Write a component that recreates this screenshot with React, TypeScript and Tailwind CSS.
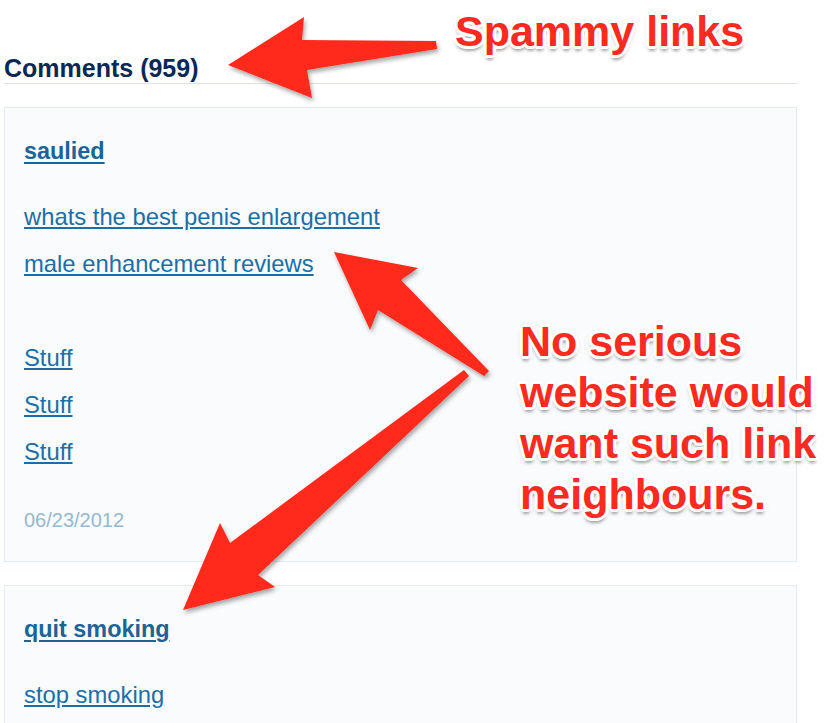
import React from 'react';

const sans = "font-['Liberation_Sans',Arial,Helvetica,sans-serif]";

// white halo + soft grey drop under the callout lettering
const callout =
    "absolute font-bold text-[43px] text-[#ff2a1f] leading-[51px] whitespace-pre " +
    "[text-shadow:-3px_0_0_#fff,3px_0_0_#fff,0_-3px_0_#fff,0_3px_0_#fff,-2px_-2px_0_#fff,2px_-2px_0_#fff,-2px_2px_0_#fff,2px_2px_0_#fff,-3px_-1px_0_#fff,3px_1px_0_#fff,-1px_3px_0_#fff,1px_-3px_0_#fff,0_5px_3px_rgba(0,0,0,0.3),0_2px_6px_rgba(0,0,0,0.25)]";

interface Comment {
    author: string;
    lines: string[];
    date?: string;
}

const comments: Comment[] = [
    {
        author: 'saulied',
        lines: ['whats the best penis enlargement', 'male enhancement reviews', '', 'Stuff', 'Stuff', 'Stuff'],
        date: '06/23/2012',
    },
    {
        author: 'quit smoking',
        lines: ['stop smoking'],
    },
];

function CommentCard({ c }: { c: Comment }) {
    return (
        <div className="mt-[23px] border border-[#e3ecf2] bg-[#f9fbfd] pl-[19px] pt-[28px] pb-[29px]">
            <a href="#" className="block text-[23.4px] leading-[30px] font-bold text-[#1b6498] underline decoration-2 underline-offset-[3px]">
                {c.author}
            </a>
            <div className="mt-[27px]">
                {c.lines.map((l, i) =>
                    l ? (
                        <div key={i} className="h-[47px] leading-[47px]">
                            <a href="#" className="text-[23.8px] text-[#1b6fa6] underline underline-offset-[2px]">
                                {l}
                            </a>
                        </div>
                    ) : (
                        <div key={i} className="h-[47px]" />
                    )
                )}
            </div>
            {c.date && <div className="mt-[33px] text-[20px] leading-[24px] text-[#96b8d1]">{c.date}</div>}
        </div>
    );
}

function Arrows() {
    return (
        <svg className="absolute left-0 top-0 pointer-events-none" width="838" height="723" viewBox="0 0 838 723">
            <defs>
                <filter id="arrowShadow" x="-10%" y="-10%" width="130%" height="130%">
                    <feDropShadow dx="1.5" dy="3" stdDeviation="2" floodColor="#000" floodOpacity="0.35" />
                </filter>
            </defs>
            <g fill="#ff2a1f" filter="url(#arrowShadow)">
                {/* points left at the heading */}
                <polygon points="228,65 304,17 302,40 436,41 437,49 307,70 312,98" />
                {/* points up-left at the link list */}
                <polygon points="334,252 418,268 401,280 489,371 484,376 378,310 370,330" />
                {/* points down-left at the next card */}
                <polygon points="183,610 220,523 230,543 464,370 469,376 258,575 275,587" />
            </g>
        </svg>
    );
}

export default function App() {
    return (
        <div className={`relative w-[838px] h-[723px] overflow-hidden bg-white ${sans}`}>
            <div className="w-[793px] ml-[4px]">
                <div className="mt-[53px] h-[31px] border-b border-[#e2e2dc] text-[25px] leading-[30px] font-bold text-[#0a2853]">
                    Comments (959)
                </div>
                {comments.map((c, i) => (
                    <CommentCard key={i} c={c} />
                ))}
            </div>

            <Arrows />

            <div className={callout} style={{ left: 455, top: 6 }}>
                Spammy links
            </div>
            <div className={callout} style={{ left: 520, top: 316 }}>
                {'No serious\nwebsite would\nwant such link\nneighbours.'}
            </div>
        </div>
    );
}
